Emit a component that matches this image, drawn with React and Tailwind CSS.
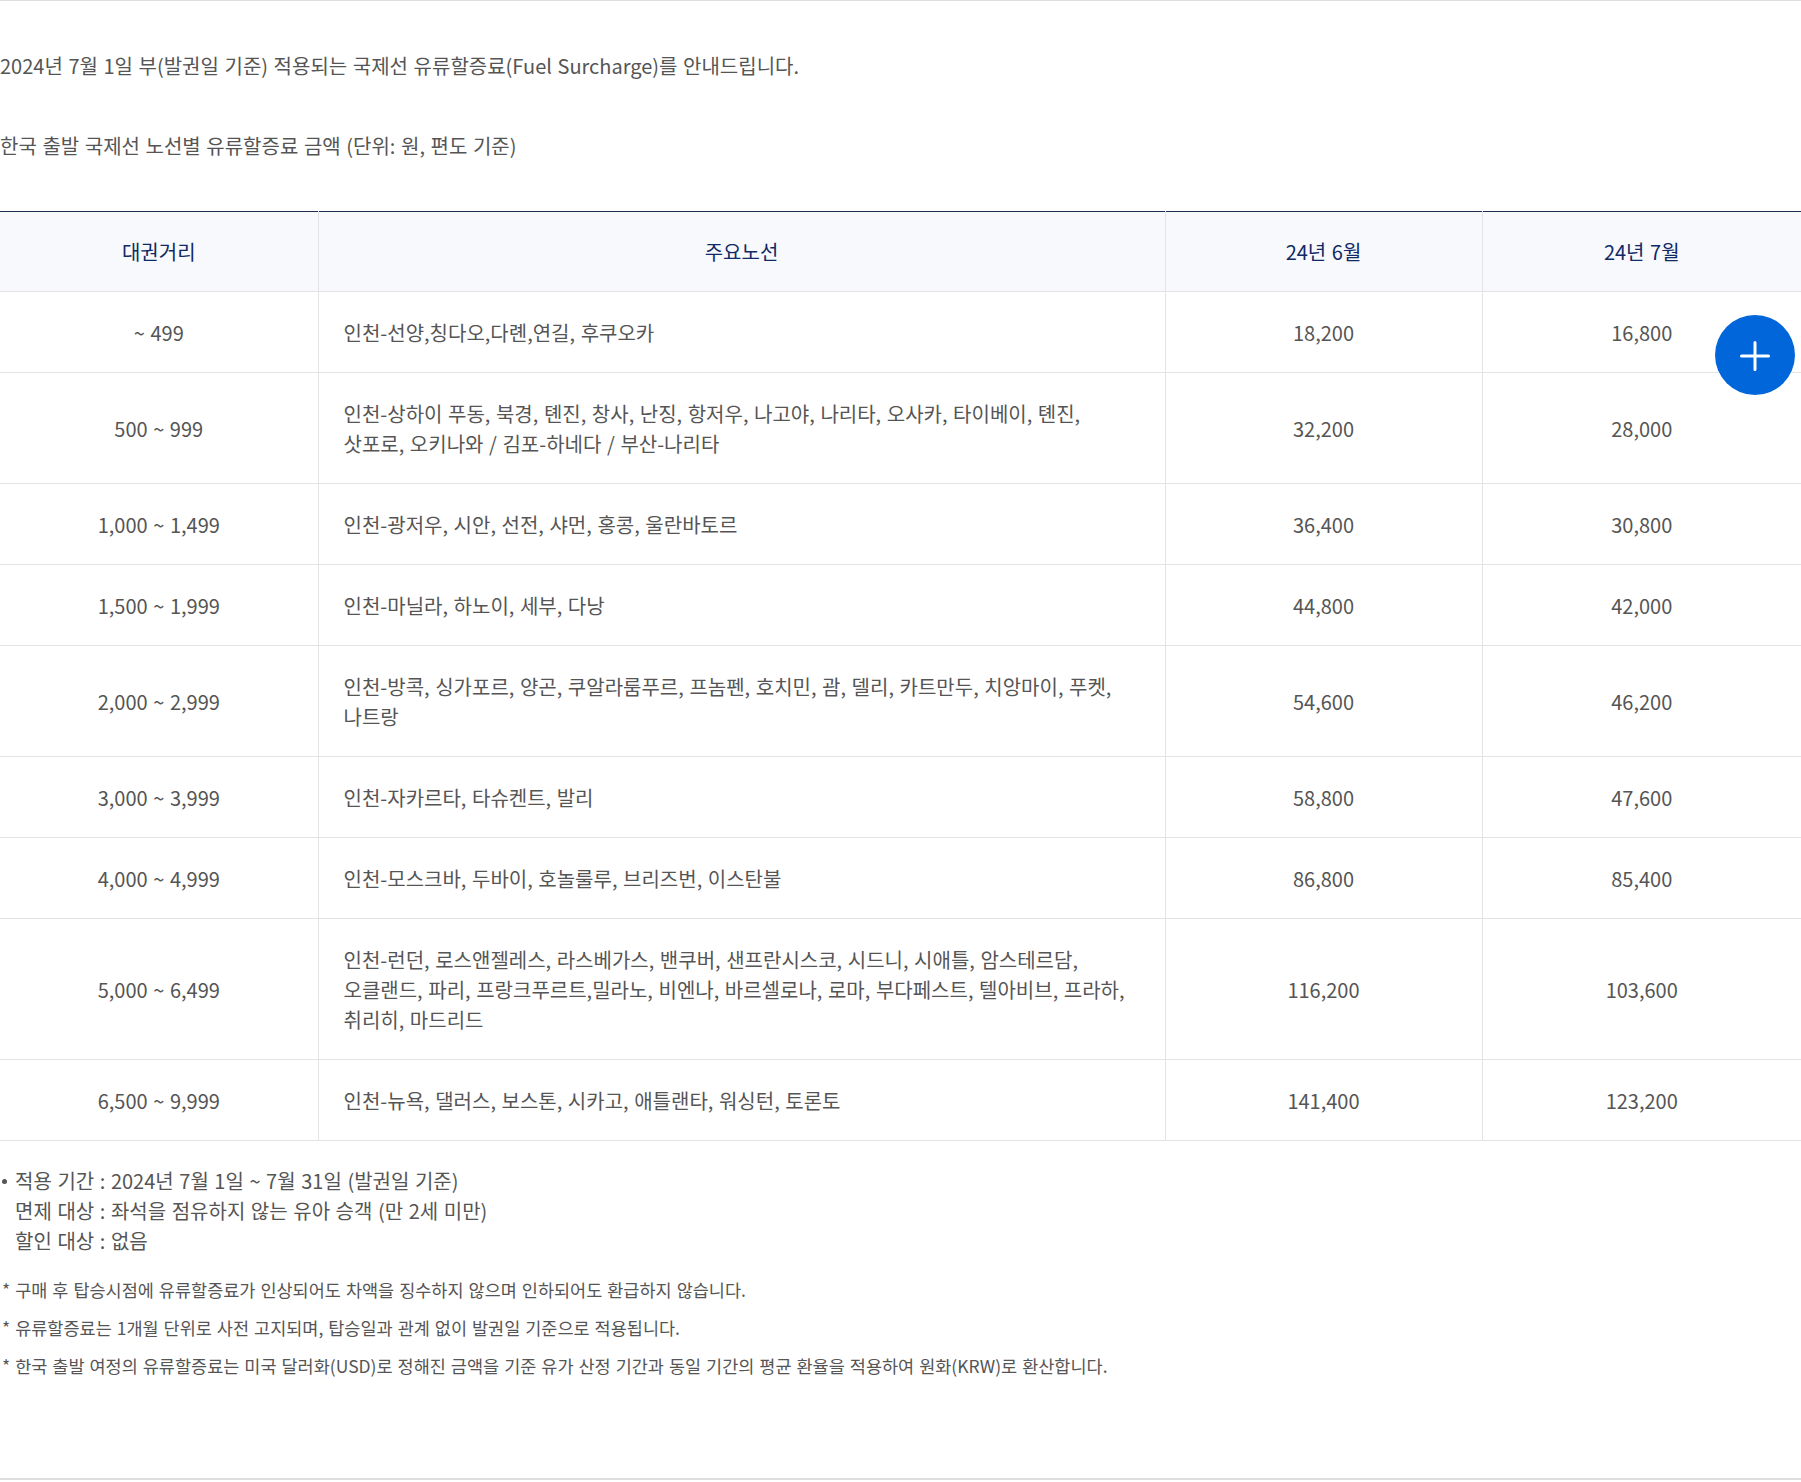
const rows = [
  ["~ 499", ["인천-선양,칭다오,다롄,연길, 후쿠오카"], "18,200", "16,800"],
  ["500 ~ 999", ["인천-상하이 푸동, 북경, 톈진, 창사, 난징, 항저우, 나고야, 나리타, 오사카, 타이베이, 톈진,", "삿포로, 오키나와 / 김포-하네다 / 부산-나리타"], "32,200", "28,000"],
  ["1,000 ~ 1,499", ["인천-광저우, 시안, 선전, 샤먼, 홍콩, 울란바토르"], "36,400", "30,800"],
  ["1,500 ~ 1,999", ["인천-마닐라, 하노이, 세부, 다낭"], "44,800", "42,000"],
  ["2,000 ~ 2,999", ["인천-방콕, 싱가포르, 양곤, 쿠알라룸푸르, 프놈펜, 호치민, 괌, 델리, 카트만두, 치앙마이, 푸켓,", "나트랑"], "54,600", "46,200"],
  ["3,000 ~ 3,999", ["인천-자카르타, 타슈켄트, 발리"], "58,800", "47,600"],
  ["4,000 ~ 4,999", ["인천-모스크바, 두바이, 호놀룰루, 브리즈번, 이스탄불"], "86,800", "85,400"],
  ["5,000 ~ 6,499", ["인천-런던, 로스앤젤레스, 라스베가스, 밴쿠버, 샌프란시스코, 시드니, 시애틀, 암스테르담,", "오클랜드, 파리, 프랑크푸르트,밀라노, 비엔나, 바르셀로나, 로마, 부다페스트, 텔아비브, 프라하,", "취리히, 마드리드"], "116,200", "103,600"],
  ["6,500 ~ 9,999", ["인천-뉴욕, 댈러스, 보스톤, 시카고, 애틀랜타, 워싱턴, 토론토"], "141,400", "123,200"],
];
const heads = ["대권거리", "주요노선", "24년 6월", "24년 7월"];

export default function App() {
  return (
    <div className="relative w-[1801px] h-[1482px] bg-white text-[#555555] text-[20px] leading-[30px] [word-spacing:0.055em] font-['Noto_Sans_CJK_KR','Noto_Sans',sans-serif] border-t border-t-[#dddddd] overflow-hidden">
      <p className="mt-[50px]">2024년 7월 1일 부(발권일 기준) 적용되는 국제선 유류할증료(Fuel Surcharge)를 안내드립니다.</p>
      <p className="mt-[50px]">한국 출발 국제선 노선별 유류할증료 금액 (단위: 원, 편도 기준)</p>
      <table className="mt-[50px] w-full table-fixed border-collapse border-t border-t-[#1a2f4f]">
        <colgroup>
          <col className="w-[318px]" />
          <col className="w-[847px]" />
          <col className="w-[317px]" />
          <col className="w-[319px]" />
        </colgroup>
        <thead>
          <tr>
            {heads.map((h, i) => (
              <th key={h} className={`h-[80px] bg-[#f7f9fc] font-normal text-center text-[#0f2a66] border-b border-[#e3e3e6] ${i > 0 ? "border-l" : ""}`}>{h}</th>
            ))}
          </tr>
        </thead>
        <tbody>
          {rows.map((r) => (
            <tr key={r[0]}>
              <td className="pt-[26px] pb-[24px] text-center border-b border-[#e3e3e6]">{r[0]}</td>
              <td className="pt-[26px] pb-[24px] px-[25px] border-b border-l border-[#e3e3e6]">
                {r[1].map((l) => <div key={l} className="whitespace-nowrap">{l}</div>)}
              </td>
              <td className="pt-[26px] pb-[24px] text-center border-b border-l border-[#e3e3e6]">{r[2]}</td>
              <td className="pt-[26px] pb-[24px] text-center border-b border-l border-[#e3e3e6]">{r[3]}</td>
            </tr>
          ))}
        </tbody>
      </table>
      <ul className="mt-[25px] pl-[15px]">
        <li className="relative">
          <span className="absolute left-[-13px] top-[13px] w-[5px] h-[5px] rounded-full bg-[#555555]" />
          적용 기간 : 2024년 7월 1일 ~ 7월 31일 (발권일 기준)
        </li>
        <li>면제 대상 : 좌석을 점유하지 않는 유아 승객 (만 2세 미만)</li>
        <li>할인 대상 : 없음</li>
      </ul>
      <div className="mt-[20px] pl-[2px] text-[17.5px] leading-[27px] [word-spacing:0.06em] flex flex-col gap-[11px]">
        <p>* 구매 후 탑승시점에 유류할증료가 인상되어도 차액을 징수하지 않으며 인하되어도 환급하지 않습니다.</p>
        <p>* 유류할증료는 1개월 단위로 사전 고지되며, 탑승일과 관계 없이 발권일 기준으로 적용됩니다.</p>
        <p>* 한국 출발 여정의 유류할증료는 미국 달러화(USD)로 정해진 금액을 기준 유가 산정 기간과 동일 기간의 평균 환율을 적용하여 원화(KRW)로 환산합니다.</p>
      </div>
      <div className="mt-[99px] h-[2px] bg-[#dddddd]" />
      <button className="absolute left-[1715px] top-[314px] w-[80px] h-[80px] rounded-full bg-[#0066d9] flex items-center justify-center">
        <svg className="mt-[2px]" width="30" height="30" viewBox="0 0 30 30" fill="none" stroke="#ffffff" strokeWidth="3" strokeLinecap="round">
          <path d="M15 1.5V28.5M1.5 15H28.5" />
        </svg>
      </button>
    </div>
  );
}
